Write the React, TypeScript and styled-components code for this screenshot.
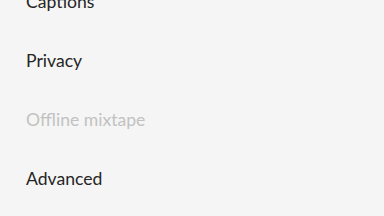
import styled, { createGlobalStyle } from "styled-components";

const GlobalStyle = createGlobalStyle`
  html, body {
    margin: 0;
    padding: 0;
    background: #f5f5f5;
    overflow: hidden;
  }
`;

const items = [
  { label: "Captions", disabled: false },
  { label: "Privacy", disabled: false },
  { label: "Offline mixtape", disabled: true },
  { label: "Advanced", disabled: false },
];

export default function App() {
  return (
    <>
      <GlobalStyle />
      <Screen>
        <List>
          {items.map((item) => (
            <Row key={item.label} disabled={item.disabled}>
              {item.label}
            </Row>
          ))}
        </List>
      </Screen>
    </>
  );
}

const Screen = styled.main`
  width: 384px;
  height: 216px;
  overflow: hidden;
  background: #f5f5f5;
`;

const List = styled.ul`
  list-style: none;
  margin: -28px 0 0 0;
  padding: 0;
`;

const Row = styled.li<{ disabled: boolean }>`
  height: 59px;
  display: flex;
  align-items: center;
  padding-left: 26px;
  font-family: Lato, "Noto Sans", sans-serif;
  font-size: 17.6px;
  color: ${(props) => (props.disabled ? "#c2c2c2" : "#252525")};
`;
